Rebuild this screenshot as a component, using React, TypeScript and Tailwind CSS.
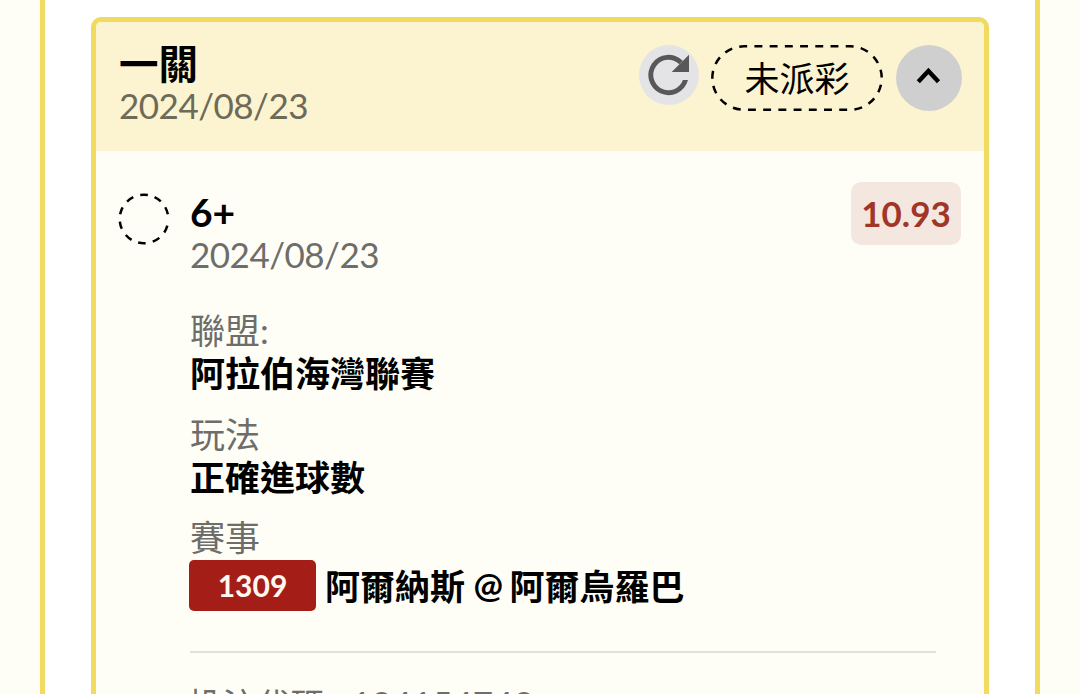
import { Fragment } from 'react';

const FONT = "font-['Lato','Noto_Sans_CJK_TC',sans-serif]";

interface Leg {
  title: string;
  date: string;
  odds: string;
  matchNo: string;
  home: string;
  away: string;
  details: { label: string; value: string }[];
}

const leg: Leg = {
  title: '6+',
  date: '2024/08/23',
  odds: '10.93',
  matchNo: '1309',
  home: '阿爾納斯',
  away: '阿爾烏羅巴',
  details: [
    { label: '聯盟:', value: '阿拉伯海灣聯賽' },
    { label: '玩法', value: '正確進球數' },
  ],
};

function RefreshButton() {
  return (
    <button className="w-[60px] h-[60px] rounded-full bg-[#e4e4e6] flex items-center justify-center">
      <svg width="60" height="60" viewBox="0 0 60 60" fill="#58585a">
        <path d="M49 35A20.15 20.15 0 1 1 43.75 15.75L40.3 19.2A15.25 15.25 0 1 0 43.9 35Z" />
        <path d="M50 9.7V27H32.7Z" />
      </svg>
    </button>
  );
}

function StatusPill({ label }: { label: string }) {
  return (
    <div className="relative w-[172px] h-[66px] flex items-center justify-center">
      <svg className="absolute inset-0" width="172" height="66" viewBox="0 0 172 66" fill="none">
        <path
          d="M33 1.3H139A31.7 31.7 0 0 1 139 64.7H33A31.7 31.7 0 0 1 33 1.3Z"
          pathLength={405}
          stroke="#000"
          strokeWidth="2.5"
          strokeDasharray="7.8 7.2"
          strokeDashoffset="4.7"
        />
      </svg>
      <span className="text-[35px] leading-[42px] text-black">{label}</span>
    </div>
  );
}

function CollapseButton() {
  return (
    <button className="w-[66px] h-[66px] rounded-full bg-[#cfcfcf] flex items-center justify-center">
      <svg width="66" height="66" viewBox="0 0 66 66" fill="none">
        <path d="M22.3 36.7L32.4 26L42.5 36.7" stroke="#000" strokeWidth="4.4" />
      </svg>
    </button>
  );
}

function LegStatus() {
  return (
    <svg className="mt-[11px] shrink-0" width="52" height="52" viewBox="0 0 52 52" fill="none">
      <circle
        cx="26"
        cy="26"
        r="24.3"
        stroke="#000"
        strokeWidth="2.5"
        strokeDasharray="7.5 7.25 7.5 7.25 7.5 7.25 7.5 7.25 7.5 7.25 7.5 7.25 7.5 7.25 7.5 7.25 7.5 7.25 7.5 20"
        transform="rotate(16 26 26)"
      />
    </svg>
  );
}

export default function App() {
  return (
    <div className={`h-[694px] w-[1080px] overflow-hidden bg-[#fffef6] pl-10 ${FONT}`}>
      <div className="h-[800px] w-[1000px] border-x-[5px] border-[#f0da60] bg-white pt-[17px] pl-[46px]">
        <div className="h-[780px] w-[898px] overflow-hidden rounded-[10px] border-[5px] border-[#f0da60] bg-[#fffef6]">
          <header className="flex h-[129px] justify-between bg-[#fcf3d0] pl-[23px] pr-[22px]">
            <div className="pt-[20px]">
              <h1 className="text-[39.5px] leading-[44px] font-bold text-black">一關</h1>
              <p className="-mt-0.5 text-[35px] leading-[42px] tracking-[-0.5px] text-[#6d6a57]">2024/08/23</p>
            </div>
            <div className="flex items-start pt-[23px]">
              <RefreshButton />
              <div className="mr-[13px] ml-3">
                <StatusPill label="未派彩" />
              </div>
              <CollapseButton />
            </div>
          </header>

          <section className="flex pt-[31px] pl-[22px] pr-[23px]">
            <LegStatus />
            <div className="ml-5 min-w-0 flex-1">
              <div className="flex items-start justify-between">
                <div>
                  <h2 className="mt-2 text-[39px] leading-[44px] font-bold text-black">{leg.title}</h2>
                  <p className="-mt-px text-[35px] leading-[42px] tracking-[-0.5px] text-[#6d6d69]">{leg.date}</p>
                </div>
                <div className="flex h-[63px] w-[110px] items-center justify-center rounded-[10px] bg-[#f4e7e0] pb-px text-[35px] font-bold text-[#a03628]">
                  {leg.odds}
                </div>
              </div>

              <dl className="mt-[33px] text-[35px]">
                {leg.details.map(({ label, value }) => (
                  <Fragment key={label}>
                    <dt className="leading-[44px] text-[#6d6d69]">{label}</dt>
                    <dd className="mb-[16.5px] leading-[43px] font-bold text-black">{value}</dd>
                  </Fragment>
                ))}
                <dt className="leading-[44px] text-[#6d6d69]">賽事</dt>
                <dd className="-ml-px mt-px flex items-center">
                  <span className="flex h-[51px] w-[127px] items-center justify-center rounded-[5px] bg-[#a41e17] pb-px text-[30px] font-bold text-[#fff8f2]">
                    {leg.matchNo}
                  </span>
                  <span className="ml-[9px] pt-px leading-[43px] font-bold whitespace-nowrap text-black">
                    {leg.home} <span className="inline-block align-[2px] text-[35px] leading-none tracking-[-2px]">@</span> {leg.away}
                  </span>
                </dd>
              </dl>

              <hr className="mt-10 mr-[25px] border-t-[2px] border-[#e2e1d9]" />
              <p className="-ml-0.5 mt-[27px] flex items-start text-[#6d6d69]">
                <span className="w-[163px] text-[34.2px] leading-[50px]">投注代碼 :</span>
                <span className="text-[35px] leading-[47px]">124154742</span>
              </p>
            </div>
          </section>
        </div>
      </div>
    </div>
  );
}
